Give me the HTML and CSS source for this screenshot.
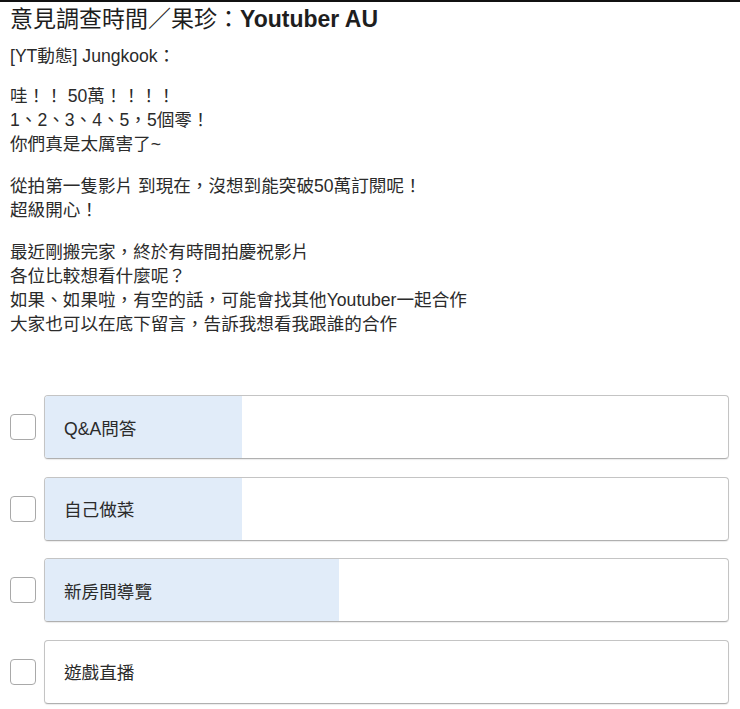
FILE: index.html
```html
<!DOCTYPE html>
<html lang="zh-Hant">
<head>
    <meta charset="UTF-8">
    <meta name="viewport" content="width=device-width, initial-scale=1.0">
    <title>意見調查時間／果珍：Youtuber AU</title>
    <link rel="stylesheet" href="styles.css">
</head>
<body>

    <div class="post">
        <h1>意見調查時間／果珍：<strong>Youtuber AU</strong></h1>
        <p class="author">[YT動態] Jungkook：</p>

        <div class="content">
            <p>哇！！ 50萬！！！！<br>1、2、3、4、5，5個零！<br>你們真是太厲害了~</p>
            <p>從拍第一隻影片 到現在，沒想到能突破50萬訂閱呢！<br>超級開心！</p>
            <p>最近剛搬完家，終於有時間拍慶祝影片<br>各位比較想看什麼呢？<br>如果、如果啦，有空的話，可能會找其他Youtuber一起合作<br>大家也可以在底下留言，告訴我想看我跟誰的合作</p>
        </div>

        <form class="poll">
            <label class="option">
                <input type="checkbox" class="check">
                <span class="bar">
                    <span class="fill" style="width: 28.9%"></span>
                    <span class="name">Q&amp;A問答</span>
                </span>
            </label>
            <label class="option">
                <input type="checkbox" class="check">
                <span class="bar">
                    <span class="fill" style="width: 28.9%"></span>
                    <span class="name">自己做菜</span>
                </span>
            </label>
            <label class="option">
                <input type="checkbox" class="check">
                <span class="bar">
                    <span class="fill" style="width: 43%"></span>
                    <span class="name">新房間導覽</span>
                </span>
            </label>
            <label class="option">
                <input type="checkbox" class="check">
                <span class="bar">
                    <span class="fill" style="width: 0%"></span>
                    <span class="name">遊戲直播</span>
                </span>
            </label>
        </form>
    </div>

</body>
</html>
```

FILE: styles.css
```css
body {
    font-family: 'Liberation Sans', Arial, 'Noto Sans CJK TC', sans-serif;
    font-size: 17.6px;
    color: #2b2b2b;
    background: #fff;
    margin: 0;
    padding: 0;
    border-top: 2px solid #111;
}

.post {
    padding: 0 11px 0 10px;
}

h1 {
    font-size: 23px;
    font-weight: normal;
    color: #1e1e1e;
    margin: 2px 0 0;
    line-height: 30px;
}

h1 strong {
    font-weight: bold;
}

.author {
    margin: 10px 0 0;
    line-height: 24px;
}

.content {
    margin-top: 16px;
}

.content p {
    margin: 0 0 18px;
    line-height: 24px;
}

.poll {
    margin-top: 59px;
}

.option {
    display: flex;
    align-items: center;
    gap: 8px;
    margin-bottom: 17.5px;
    cursor: pointer;
}

.check {
    appearance: none;
    width: 26px;
    height: 26px;
    margin: 0;
    border: 1px solid #a9a9a9;
    border-radius: 4px;
    background: #fff;
    flex-shrink: 0;
}

.bar {
    position: relative;
    flex: 1;
    box-sizing: border-box;
    height: 64px;
    border: 1px solid #c4c4c4;
    border-bottom-color: #b0b0b0;
    border-radius: 4px;
    box-shadow: 0 1px 1px rgba(0, 0, 0, 0.08);
    overflow: hidden;
    display: flex;
    align-items: center;
}

.fill {
    position: absolute;
    top: 0;
    left: 0;
    bottom: 0;
    background: #e1ecf9;
}

.name {
    position: relative;
    padding-left: 19px;
}
```
